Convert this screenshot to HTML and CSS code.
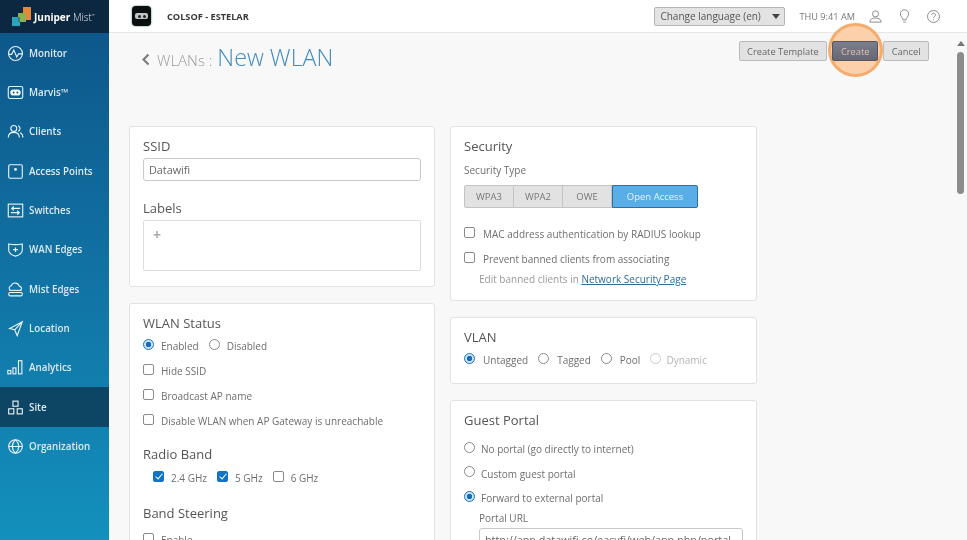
FILE: index.html
```html
<!doctype html>
<html>
<head>
<meta charset="utf-8">
<title>New WLAN</title>
  <link rel="stylesheet" href="styles.css">
</head>
<body>
  <div class="app">
    <aside class="side">
      <div class="brand">
        <svg class="brand-mark" width="20" height="20" viewBox="0 0 20 20">
          <rect x="11" y="0" width="8" height="13" fill="#e8873a"/>
          <rect x="6" y="6" width="8" height="9" fill="#8ab34a"/>
          <rect x="0" y="10" width="8" height="9" fill="#2aa6b8"/>
          <rect x="6" y="10" width="2" height="5" fill="#3d7f6a"/>
        </svg>
        <span class="brand-name"><b>Juniper</b> Mist<sup>™</sup></span>
      </div>
      <nav class="menu">
        <a class="menu-item" href="#">
          <svg class="ico" viewBox="0 0 20 20"><circle cx="10" cy="10" r="8.2"/><path d="M2 11h3.500l2.500-5 3.500 8 2-3.500h4.500"/></svg>Monitor
        </a>
        <a class="menu-item" href="#">
          <svg class="ico" viewBox="0 0 20 20"><rect x="1.500" y="3" width="17" height="14" rx="2"/><rect x="4.500" y="7" width="11" height="6" rx="3" fill="#fff"/><circle class="eye" cx="7.800" cy="10" r="1.200"/><circle class="eye" cx="12.200" cy="10" r="1.200"/></svg>Marvis™
        </a>
        <a class="menu-item" href="#">
          <svg class="ico" viewBox="0 0 20 20"><circle cx="8" cy="6.500" r="3.500"/><path d="M1.500 17c0-4 2.500-6 6.500-6s6.500 2 6.500 6M13 3.200a3.500 3.500 0 0 1 0 6.600M15.500 11.500c2 .8 3.200 2.600 3.200 5.500"/></svg>Clients
        </a>
        <a class="menu-item" href="#">
          <svg class="ico" viewBox="0 0 20 20"><rect x="2" y="2" width="16" height="16" rx="1.500"/><circle cx="10" cy="7.500" r="1" fill="#fff"/></svg>Access Points
        </a>
        <a class="menu-item" href="#">
          <svg class="ico" viewBox="0 0 20 20"><rect x="1.500" y="2.500" width="17" height="15"/><path d="M15.500 7.500H5.500M8 5.200 5.500 7.500 8 9.800M4.500 12.500h10M12 10.200l2.500 2.300-2.500 2.300"/></svg>Switches
        </a>
        <a class="menu-item" href="#">
          <svg class="ico" viewBox="0 0 20 20"><path d="M2 3.500c5 1 11 1 16 0v7c0 3.500-3.500 6-8 7.500-4.500-1.500-8-4-8-7.500zM10 7.500v5.500M7.200 10.200h5.600"/></svg>WAN Edges
        </a>
        <a class="menu-item" href="#">
          <svg class="ico" viewBox="0 0 20 20"><path d="M4 11c-2.500-2-1.500-5 1-5.500C6 3 8 2 10.500 2.500c2.500.5 3.500 2 4 3.500 2.500.5 3.500 3 1.500 5"/><path d="M3 11h14"/><rect x="2" y="13.500" width="16" height="4" rx="1.500"/></svg>Mist Edges
        </a>
        <a class="menu-item" href="#">
          <svg class="ico" viewBox="0 0 20 20"><path d="M18 2 3 10l6 1.500 3 7zM18 2 9 11.500"/></svg>Location
        </a>
        <a class="menu-item" href="#">
          <svg class="ico" viewBox="0 0 20 20"><rect x="1" y="13.500" width="3.500" height="4"/><rect x="7" y="10.500" width="3.500" height="7"/><rect x="13.500" y="2" width="4" height="15.500"/></svg>Analytics
        </a>
        <a class="menu-item is-current" href="#">
          <svg class="ico" viewBox="0 0 20 20"><rect x="7" y="2.500" width="6" height="6"/><rect x="2" y="11.500" width="6" height="6"/><rect x="12" y="11.500" width="6" height="6"/></svg>Site
        </a>
        <a class="menu-item" href="#">
          <svg class="ico" viewBox="0 0 20 20"><circle cx="10" cy="10" r="8"/><path d="M2 10h16M10 2c-5 5-5 11 0 16M10 2c5 5 5 11 0 16"/></svg>Organization
        </a>
      </nav>
    </aside>

    <div class="body">
      <header class="top">
        <div class="org-logo"><span class="org-eyes"><i></i><i></i></span></div>
        <span class="org-name">COLSOF - ESTELAR</span>
        <div class="top-right">
          <button class="lang">Change language (en)<span class="caret"></span></button>
          <span class="clock">THU 9:41 AM</span>
          <svg class="top-ico" viewBox="0 0 20 20"><circle cx="10" cy="6.500" r="4"/><path d="M2.500 17.500c0-4 3-5.500 7.500-5.500s7.500 1.500 7.500 5.500z"/></svg>
          <svg class="top-ico" viewBox="0 0 20 20"><path d="M8 14.500c0-3-3.500-4-3.500-8a5.500 5.500 0 0 1 11 0c0 4-3.500 5-3.500 8z"/><path d="M8.500 17.500h3"/></svg>
          <svg class="top-ico" viewBox="0 0 20 20"><circle cx="10" cy="10" r="8"/><path d="M7.500 8a2.500 2.500 0 1 1 3.800 2.100c-.9.600-1.300 1-1.300 2M10 14v1.200"/></svg>
        </div>
      </header>

      <main class="content">
        <div class="page-head">
          <div class="crumbs">
            <svg class="back" width="9" height="13" viewBox="0 0 9 13"><path d="M7.500 1.500 2.500 6.500l5 5"/></svg>
            <span class="crumb">WLANs :</span>
            <h1 class="title">New WLAN</h1>
          </div>
          <div class="actions">
            <button class="btn">Create Template</button>
            <button class="btn btn-main">Create<span class="spot"></span></button>
            <button class="btn">Cancel</button>
          </div>
        </div>

        <div class="columns">
          <div class="col col-left">
            <section class="card card-ssid">
              <h2>SSID</h2>
              <input class="field" type="text" value="Datawifi">
              <h2 class="labels-head">Labels</h2>
              <div class="labels-box">+</div>
            </section>
            <section class="card card-status">
              <h2>WLAN Status</h2>
              <div class="opts">
                <label class="opt"><input type="radio" name="st" checked>Enabled</label>
                <label class="opt"><input type="radio" name="st">Disabled</label>
              </div>
              <label class="opt opt-row"><input type="checkbox">Hide SSID</label>
              <label class="opt opt-row"><input type="checkbox">Broadcast AP name</label>
              <label class="opt opt-row"><input type="checkbox">Disable WLAN when AP Gateway is unreachable</label>
              <h2 class="sub">Radio Band</h2>
              <div class="opts opts-band">
                <label class="opt"><input type="checkbox" checked>2.4 GHz</label>
                <label class="opt"><input type="checkbox" checked>5 GHz</label>
                <label class="opt"><input type="checkbox">6 GHz</label>
              </div>
              <h2 class="sub sub-steer">Band Steering</h2>
              <label class="opt opt-row"><input type="checkbox">Enable</label>
            </section>
          </div>

          <div class="col col-wide">
            <section class="card card-sec">
              <h2>Security</h2>
              <div class="small-label">Security Type</div>
              <div class="seg">
                <button class="seg-btn">WPA3</button>
                <button class="seg-btn">WPA2</button>
                <button class="seg-btn">OWE</button>
                <button class="seg-btn is-on">Open Access</button>
              </div>
              <label class="opt opt-row"><input type="checkbox">MAC address authentication by RADIUS lookup</label>
              <label class="opt opt-row"><input type="checkbox">Prevent banned clients from associating</label>
              <div class="note">Edit banned clients in <a href="#">Network Security Page</a></div>
            </section>
            <section class="card card-vlan">
              <h2>VLAN</h2>
              <div class="opts">
                <label class="opt"><input type="radio" name="vl" checked>Untagged</label>
                <label class="opt"><input type="radio" name="vl">Tagged</label>
                <label class="opt"><input type="radio" name="vl">Pool</label>
                <label class="opt is-off"><input type="radio" name="vl" disabled>Dynamic</label>
              </div>
            </section>
            <section class="card card-guest">
              <h2>Guest Portal</h2>
              <label class="opt opt-row"><input type="radio" name="gp">No portal (go directly to internet)</label>
              <label class="opt opt-row"><input type="radio" name="gp">Custom guest portal</label>
              <label class="opt opt-row"><input type="radio" name="gp" checked>Forward to external portal</label>
              <div class="portal">
                <div class="small-label">Portal URL</div>
                <input class="field" type="text" value="http://app.datawifi.co/easyfi/web/app.php/portal">
              </div>
            </section>
          </div>
        </div>
      </main>

      <div class="scroll"><span class="scroll-up"></span><span class="scroll-thumb"></span></div>
    </div>
  </div>
</body>
</html>
```
FILE: styles.css
```css
body {
  margin: 0;
  font-family: 'Open Sans', Arial, sans-serif;
  color: #666;
  overflow: hidden;
}
.app {
  display: flex;
  width: 967px;
  height: 540px;
  overflow: hidden;
  filter: blur(.4px);
}

/* sidebar */
.side {
  width: 109px;
  flex-shrink: 0;
  background: linear-gradient(#0e5488, #1390bd);
  color: #e4eff6;
}
.brand {
  display: flex;
  align-items: center;
  gap: 2px;
  height: 33px;
  padding-left: 12px;
  box-sizing: border-box;
  background: #0c2740;
}
.brand-name {
  font-size: 10px;
  font-weight: 300;
  color: #dfe6ec;
  white-space: nowrap;
}
.brand-name b {
  font-weight: 700;
  color: #fff;
}
.brand-name sup {
  font-size: 4px;
}
.menu {
  display: flex;
  flex-direction: column;
  margin-top: .7px;
}
.menu-item {
  display: flex;
  align-items: center;
  gap: 5px;
  height: 39.3px;
  padding-left: 7px;
  font-size: 9.8px;
  font-weight: 600;
  color: #dde9f1;
  text-decoration: none;
  white-space: nowrap;
}
.menu-item.is-current {
  background: #0d4565;
}
.ico {
  width: 17px;
  height: 17px;
  flex-shrink: 0;
  fill: none;
  stroke: #eef5f9;
  stroke-width: 1.3;
}
.ico .eye {
  fill: #0e5488;
  stroke: none;
}

/* top bar */
.body {
  flex: 1;
  position: relative;
  display: flex;
  flex-direction: column;
  min-width: 0;
  background: #f8f8f8;
}
.top {
  display: flex;
  align-items: center;
  height: 33px;
  flex-shrink: 0;
  box-sizing: border-box;
  padding: 0 26px 0 23px;
  background: #fff;
  border-bottom: 1px solid #e6e6e6;
}
.org-logo {
  display: flex;
  align-items: center;
  justify-content: center;
  width: 19px;
  height: 20px;
  border-radius: 4px;
  background: #0c0f10;
  box-shadow: 0 0 2px #2b6d6a;
}
.org-eyes {
  display: flex;
  align-items: center;
  justify-content: center;
  gap: 2px;
  width: 13px;
  height: 6px;
  border-radius: 2px;
  background: #c4c4c4;
}
.org-eyes i {
  width: 3px;
  height: 3px;
  border-radius: 50%;
  background: #222;
}
.org-name {
  margin-left: 16px;
  font-size: 9.2px;
  font-weight: 700;
  color: #3a3a3a;
}
.top-right {
  display: flex;
  align-items: center;
  margin-left: auto;
}
.lang {
  display: flex;
  align-items: center;
  justify-content: space-between;
  width: 131px;
  height: 19px;
  padding: 0 4px 0 5px;
  font-family: inherit;
  font-size: 10px;
  color: #555;
  background: #e3e3e3;
  border: 1px solid #b5b5b5;
  border-radius: 2px;
}
.caret {
  border-left: 4.5px solid transparent;
  border-right: 4.5px solid transparent;
  border-top: 5px solid #444;
}
.clock {
  margin: 0 13px 0 14px;
  font-size: 9.2px;
  color: #777;
}
.top-ico {
  width: 15px;
  height: 15px;
  margin-left: 14px;
  fill: none;
  stroke: #777;
  stroke-width: 1.1;
}
.clock + .top-ico {
  margin-left: 0;
}

/* page */
.content {
  flex: 1;
  padding: 0 38px 0 20px;
}
.page-head {
  display: flex;
  justify-content: space-between;
  height: 93px;
  padding-top: 8px;
  box-sizing: border-box;
}
.crumbs {
  display: flex;
  align-items: baseline;
  padding-left: 12px;
  height: 36px;
}
.back {
  margin-right: 7px;
  fill: none;
  stroke: #777;
  stroke-width: 2;
}
.crumb {
  font-size: 15px;
  font-weight: 300;
  color: #999;
  margin-right: 5px;
}
.title {
  margin: 0;
  font-size: 23.3px;
  font-weight: 300;
  color: #3f8ac0;
}
.actions {
  position: relative;
  z-index: 1;
  display: flex;
  gap: 5px;
  height: 20px;
}
.btn {
  position: relative;
  height: 20px;
  padding: 0 7.5px;
  font-family: inherit;
  font-size: 9.3px;
  color: #666;
  background: #e2e2e2;
  border: 1px solid #bbb;
  border-radius: 2px;
}
.btn-main {
  width: 46px;
  padding: 0;
  color: #dcc3ac;
  background: linear-gradient(#7d7e8c, #666773);
  border-color: #55565f;
}
.spot {
  position: absolute;
  z-index: -1;
  left: -5px;
  top: -19px;
  width: 55px;
  height: 54px;
  border: 3px solid #f5ab6c;
  border-radius: 50%;
  background: #fbd0aa;
  box-sizing: border-box;
}

/* cards */
.columns {
  display: flex;
  gap: 15px;
}
.col {
  display: flex;
  flex-direction: column;
  gap: 16px;
  width: 306px;
}
.col-wide {
  width: 307px;
}
.card {
  box-sizing: border-box;
  padding: 10px 13px;
  background: #fff;
  border: 1px solid #e2e2e2;
  border-radius: 3px;
}
.card h2 {
  margin: 0;
  font-size: 13px;
  line-height: 18px;
  font-weight: 400;
  color: #555;
}
.card-ssid {
  height: 161px;
}
.card-sec {
  height: 175px;
}
.card-vlan {
  height: 67px;
}
.field {
  display: block;
  box-sizing: border-box;
  width: 100%;
  height: 23px;
  margin-top: 3px;
  padding: 0 5px;
  font-family: inherit;
  font-size: 10.8px;
  color: #666;
  background: #fff;
  border: 1px solid #c9c9c9;
  border-radius: 3px;
}
.card .labels-head {
  margin-top: 18px;
}
.labels-box {
  height: 51px;
  margin-top: 3px;
  padding: 4px 9px;
  box-sizing: border-box;
  font-size: 14px;
  font-weight: 700;
  color: #aaa;
  border: 1px solid #ddd;
  border-radius: 2px;
}
.opts {
  display: flex;
  gap: 10px;
  margin-top: 7px;
}
.opts-band {
  padding-left: 10px;
  margin-top: 8px;
}
.opt {
  display: flex;
  align-items: center;
  font-size: 10px;
  line-height: 14px;
  color: #6e6e6e;
  white-space: nowrap;
}
.opt-row {
  margin-top: 11px;
}
.opt input {
  appearance: none;
  box-sizing: border-box;
  width: 11px;
  height: 11px;
  margin: 0 8px 0 0;
  flex-shrink: 0;
  background: #fff;
  border: 1px solid #8a8a8a;
  border-radius: 2px;
  transform: translateY(-2px);
}
.col-left .opt input {
  margin-right: 7px;
}
.opt input[type=radio] {
  border-radius: 50%;
}
.opt input[type=radio]:checked {
  border-color: #1273c4;
  background: radial-gradient(circle, #0f6cc0 0 2.5px, #cfe4f6 3px);
}
.opt input[type=checkbox]:checked {
  border-color: #1273c4;
  background: #1273c4;
  position: relative;
}
.opt input[type=checkbox]:checked::after {
  content: "";
  position: absolute;
  left: 3px;
  top: 0;
  width: 3px;
  height: 6px;
  border: solid #fff;
  border-width: 0 1.5px 1.5px 0;
  transform: rotate(40deg);
}
.opt.is-off {
  color: #b5b5b5;
}
.opt.is-off input {
  margin-right: 5px;
  border-color: #ccc;
}
.card .sub {
  margin-top: 17px;
}
.card .sub-steer {
  margin-top: 19px;
}
.small-label {
  font-size: 10px;
  line-height: 14px;
  margin-top: 8px;
  color: #6e6e6e;
}
.seg {
  display: flex;
  margin: 8px 0 19px;
  height: 23px;
}
.seg-btn {
  width: 49px;
  padding: 0;
  font-family: inherit;
  font-size: 9.5px;
  color: #777;
  background: #e2e2e2;
  border: 1px solid #c4c4c4;
  border-left-width: 0;
}
.seg-btn:first-child {
  width: 50px;
  border-left-width: 1px;
  border-radius: 2px 0 0 2px;
}
.seg-btn.is-on {
  width: 86px;
  color: #e8f3fb;
  background: #5aaee8;
  border: 1px solid #2f6fa3;
  border-radius: 0 2px 2px 0;
}
.note {
  margin: 6px 0 0 15px;
  font-size: 10px;
  line-height: 14px;
  color: #999;
}
.note a {
  color: #2b6d99;
}
.card-guest h2 + .opt-row {
  margin-top: 13px;
}
.card-guest .opt-row {
  margin-top: 10.5px;
}
.card-guest .opt input {
  margin-right: 6px;
}
.portal {
  padding-left: 15px;
}
.portal .small-label {
  margin-top: 6px;
}

/* scrollbar */
.scroll {
  position: absolute;
  top: 33px;
  right: 2px;
  bottom: 0;
  width: 9px;
  display: flex;
  flex-direction: column;
  align-items: center;
  padding-top: 8px;
  box-sizing: border-box;
}
.scroll-up {
  border-left: 4px solid transparent;
  border-right: 4px solid transparent;
  border-bottom: 5px solid #777;
}
.scroll-thumb {
  width: 7px;
  height: 142px;
  margin-top: 6px;
  background: #8c8c8c;
  border-radius: 4px;
}
```
